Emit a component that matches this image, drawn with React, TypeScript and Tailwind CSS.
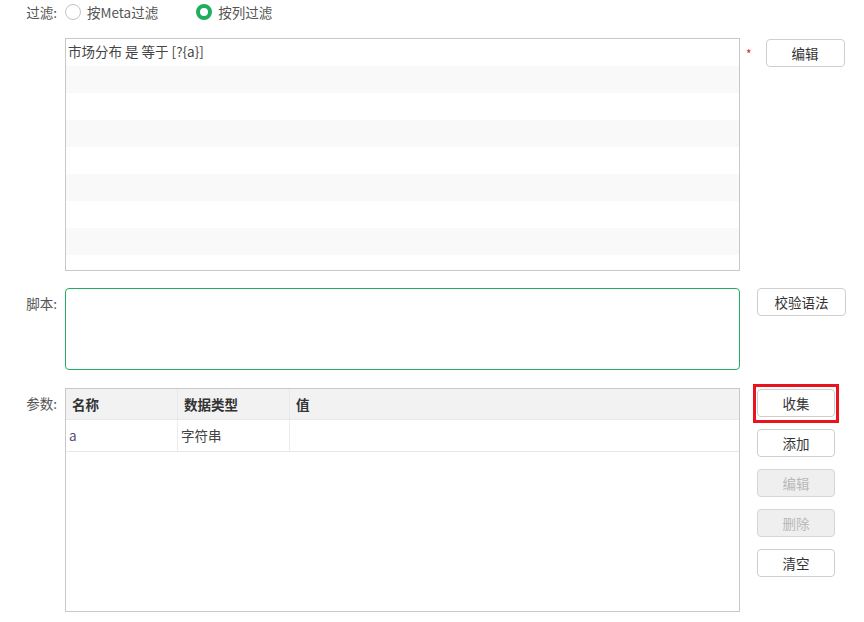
import React from 'react';

const Btn: React.FC<{ label: string; disabled?: boolean; className?: string }> = ({ label, disabled, className = '' }) => (
  <button
    type="button"
    disabled={disabled}
    className={`h-[28px] rounded-[4px] border text-[13.5px] ${
      disabled ? 'bg-[#efefef] border-[#d6d6d6] text-[#b8b8b8]' : 'bg-white border-[#cfcfcf] text-[#333]'
    } ${className}`}
  >
    {label}
  </button>
);

const Radio: React.FC<{ checked?: boolean; label: string }> = ({ checked, label }) => (
  <label className="flex items-center gap-[6px]">
    <span
      className={`w-4 h-4 rounded-full box-border ${
        checked ? 'border-[4px] border-[#1fae5e] bg-white' : 'border border-[#c4c4c4] bg-white'
      }`}
    />
    <span>{label}</span>
  </label>
);

export default function App() {
  const stripes = Array.from({ length: 9 });

  return (
    <div
      className="w-[864px] h-[622px] bg-white text-[13.5px] text-[#555] overflow-hidden"
      style={{ fontFamily: '"Noto Sans CJK SC", "Noto Sans", sans-serif' }}
    >
      {/* 过滤 */}
      <div className="flex items-center h-[24px]">
        <div className="w-[57px] text-right">过滤:</div>
        <div className="ml-2 flex items-center gap-[38px]">
          <Radio label="按Meta过滤" />
          <Radio checked label="按列过滤" />
        </div>
      </div>

      <div className="flex mt-[14px]">
        <div className="ml-[65px] w-[675px] h-[233px] border border-[#c8c8c8] overflow-hidden">
          {stripes.map((_, i) => (
            <div key={i} className={`h-[27px] px-[2px] leading-[25px] text-[#444] ${i % 2 === 1 ? 'bg-[#f9f9f9]' : 'bg-white'}`}>
              {i === 0 ? '市场分布 是 等于 [?{a}]' : ''}
            </div>
          ))}
        </div>
        <div className="ml-[6px] mt-[10px] text-[#e5262d] text-[12px] leading-none">*</div>
        <div className="ml-[14px] mt-px">
          <Btn label="编辑" className="w-[79px]" />
        </div>
      </div>

      {/* 脚本 */}
      <div className="flex mt-[17px]">
        <div className="w-[57px] text-right pt-[5px]">脚本:</div>
        <div className="ml-2 w-[675px] h-[82px] border border-[#25ad5f] rounded-[4px]" />
        <div className="ml-[17px]">
          <Btn label="校验语法" className="w-[89px]" />
        </div>
      </div>

      {/* 参数 */}
      <div className="flex mt-[18px]">
        <div className="w-[57px] text-right pt-[5px]">参数:</div>
        <div className="ml-2 w-[675px] h-[224px] border border-[#c8c8c8]">
          <div className="flex h-[31px] bg-[#f2f2f2] font-semibold text-[#333] border-b border-[#e8e8e8]">
            <div className="w-[112px] px-[6px] leading-[31px] border-r border-[#e8e8e8]">名称</div>
            <div className="w-[112px] px-[6px] leading-[31px] border-r border-[#e8e8e8]">数据类型</div>
            <div className="flex-1 px-[6px] leading-[31px]">值</div>
          </div>
          <div className="flex h-[32px] border-b border-[#e8e8e8] text-[#444]">
            <div className="w-[112px] px-[3px] leading-[31px] border-r border-[#ececec] text-[#5a4a78]">a</div>
            <div className="w-[112px] px-[3px] leading-[31px] border-r border-[#ececec]">字符串</div>
            <div className="flex-1" />
          </div>
        </div>
        <div className="ml-[17px] flex flex-col gap-[12px] pt-px">
          <div className="relative">
            <Btn label="收集" className="w-[78px]" />
            <span className="absolute left-[-4px] right-[-4px] top-[-5px] bottom-[-6px] border-[3px] border-[#e8131c] pointer-events-none" />
          </div>
          <Btn label="添加" className="w-[78px]" />
          <Btn label="编辑" disabled className="w-[78px]" />
          <Btn label="删除" disabled className="w-[78px]" />
          <Btn label="清空" className="w-[78px]" />
        </div>
      </div>
    </div>
  );
}
